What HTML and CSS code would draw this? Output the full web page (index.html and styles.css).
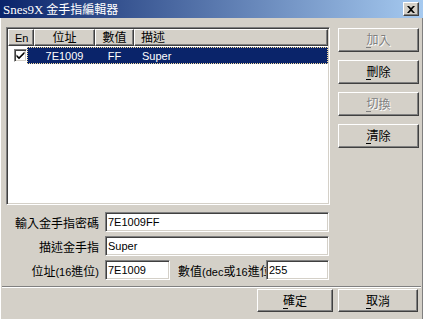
FILE: index.html
```html
<!DOCTYPE html>
<html>
<head>
<meta charset="utf-8">
<link rel="stylesheet" href="styles.css">
</head>
<body>
<div class="window">
  <div class="titlebar">
    <span class="title"><span class="tl">Snes9X</span> 金手指編輯器</span>
    <span class="close">
      <svg width="8" height="7" viewBox="0 0 8 7"><path d="M0 0h2l2 2 2-2h2L5 3.5 8 7H6L4 5 2 7H0l3-3.5z" fill="#000"/></svg>
    </span>
  </div>
  <div class="client">
    <div class="top">
      <div class="listview">
        <div class="lv-header">
          <div class="hc c-en"><span class="t">En</span></div>
          <div class="hc c-addr">位址</div>
          <div class="hc c-val">數值</div>
          <div class="hc c-desc">描述</div>
        </div>
        <div class="lv-row">
          <div class="lead">
            <span class="chk"><svg width="9" height="9" viewBox="0 0 9 9"><path d="M0.5 3.5l2.5 2.5 5.5-5.5v2.2L3 8.2 0.5 5.7z" fill="#000"/></svg></span>
          </div>
          <div class="sel">
            <span class="sp"></span>
            <span class="cell c-addr t">7E1009</span>
            <span class="cell c-val t">FF</span>
            <span class="cell c-desc t">Super</span>
          </div>
        </div>
      </div>
      <div class="side">
        <div class="btn dis"><span class="mn">加</span>入</div>
        <div class="btn"><span class="mn">刪</span>除</div>
        <div class="btn dis"><span class="mn">切</span>換</div>
        <div class="btn"><span class="mn">清</span>除</div>
      </div>
    </div>
    <div class="form">
      <div class="row">
        <span class="lbl">輸入金手指密碼</span>
        <input class="in w-full" type="text" value="7E1009FF">
      </div>
      <div class="row">
        <span class="lbl">描述金手指</span>
        <input class="in w-full" type="text" value="Super">
      </div>
      <div class="row">
        <span class="lbl">位址<span class="t">(16</span>進位<span class="t">)</span></span>
        <input class="in w-addr" type="text" value="7E1009">
        <span class="lbl2">數值<span class="t">(dec</span>或<span class="t">16</span>進位</span>
        <input class="in w-val" type="text" value="255">
      </div>
    </div>
    <div class="sep"></div>
    <div class="footer">
      <div class="btn ok"><span class="mn">確</span>定</div>
      <div class="btn cancel"><span class="mn">取</span>消</div>
    </div>
  </div>
</div>
</body>
</html>
```

FILE: styles.css
```css
* { box-sizing: border-box; }
body {
  margin: 0;
  background: #d4d0c8;
  font-family: "Noto Sans CJK TC", sans-serif;
  font-size: 12px;
  color: #000;
}
.t {
  font-family: "Liberation Sans", sans-serif;
  font-size: 11px;
}
.window {
  width: 423px;
  height: 319px;
  display: flex;
  flex-direction: column;
}
.titlebar {
  height: 18px;
  flex: none;
  background: linear-gradient(to right, #0a246a, #a6caf0);
  display: flex;
  align-items: center;
  justify-content: space-between;
  padding: 0 4px 0 3px;
  color: #fff;
}
.title {
  font-size: 12px;
  line-height: 18px;
  white-space: nowrap;
}
.tl {
  font-family: "Liberation Serif", serif;
  font-size: 13px;
}
.close {
  width: 16px;
  height: 14px;
  background: #d4d0c8;
  border: 1px solid;
  border-color: #fff #404040 #404040 #fff;
  box-shadow: inset -1px -1px #808080;
  display: flex;
  align-items: center;
  justify-content: center;
}
.client {
  flex: 1;
  border-left: 1px solid #fff;
  border-right: 1px solid #808080;
  display: flex;
  flex-direction: column;
}
.top {
  display: flex;
  gap: 8px;
  padding: 9px 0 0 5px;
}
.listview {
  width: 324px;
  height: 178px;
  background: #fff;
  border: 1px solid;
  border-color: #808080 #fff #fff #808080;
  box-shadow: inset 1px 1px #404040, inset -1px -1px #d4d0c8;
  padding: 1px;
}
.lv-header {
  display: flex;
  height: 17px;
}
.hc {
  height: 17px;
  background: #d4d0c8;
  border: 1px solid;
  border-color: #fff #404040 #404040 #fff;
  box-shadow: inset -1px -1px #808080;
  padding: 0 6px;
  line-height: 14px;
  white-space: nowrap;
  overflow: hidden;
}
.hc.c-en { width: 26px; }
.hc.c-addr { width: 61px; text-align: center; }
.hc.c-val { width: 39px; text-align: center; }
.hc.c-desc { flex: 1; }
.lv-row {
  display: flex;
  height: 17px;
  margin-top: 1px;
}
.lead {
  width: 19px;
  padding-left: 6px;
  display: flex;
  align-items: center;
}
.chk {
  width: 13px;
  height: 13px;
  background: #fff;
  border: 1px solid;
  border-color: #808080 #fff #fff #808080;
  box-shadow: inset 1px 1px #404040, inset -1px -1px #d4d0c8;
  display: flex;
  align-items: center;
  justify-content: center;
}
.sel {
  flex: 1;
  background: #0a246a;
  color: #fff;
  display: flex;
  align-items: center;
  outline: 1px dotted #f3dc9c;
  outline-offset: -1px;
}
.sel .sp { width: 7px; }
.cell.c-addr { width: 61px; text-align: center; }
.cell.c-val { width: 39px; text-align: center; }
.cell.c-desc { padding-left: 8px; }
.side {
  display: flex;
  flex-direction: column;
  gap: 8px;
  padding-top: 1px;
}
.btn {
  width: 81px;
  height: 24px;
  background: #d4d0c8;
  border: 1px solid;
  border-color: #fff #404040 #404040 #fff;
  box-shadow: inset -1px -1px #808080;
  display: flex;
  align-items: center;
  justify-content: center;
  line-height: 14px;
}
.btn.dis {
  color: #808080;
  text-shadow: 1px 1px #fff;
}
.mn {
  background: linear-gradient(currentColor, currentColor) no-repeat 0 100% / 5px 1px;
  padding-bottom: 2px;
}
.form {
  display: flex;
  flex-direction: column;
  gap: 4px;
  margin-top: 7px;
}
.row {
  display: flex;
  align-items: center;
  height: 20px;
}
.lbl {
  width: 98px;
  margin-right: 6px;
  text-align: right;
  white-space: nowrap;
}
.in {
  height: 20px;
  background: #fff;
  border: 1px solid;
  border-color: #808080 #fff #fff #808080;
  box-shadow: inset 1px 1px #404040, inset -1px -1px #d4d0c8;
  font-family: "Liberation Sans", sans-serif;
  font-size: 11px;
  color: #000;
  padding: 0 2px;
  margin: 0;
  outline: none;
}
.w-full { width: 224px; }
.w-addr { width: 65px; margin-right: 8px; }
.w-val { width: 63px; }
.lbl2 {
  width: 88px;
  white-space: nowrap;
  overflow: hidden;
}
.sep {
  height: 2px;
  border-top: 1px solid #808080;
  border-bottom: 1px solid #fff;
  margin: 6px 1px 0 1px;
}
.footer {
  display: flex;
  justify-content: flex-end;
  gap: 5px;
  padding-right: 4px;
  margin-top: 1px;
}
.footer .btn { height: 23px; }
.btn.ok { width: 76px; }
.btn.cancel { width: 80px; }
```
